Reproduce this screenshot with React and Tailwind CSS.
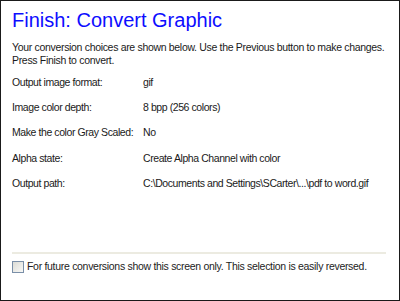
import React from "react";

const rows = [
  ["Output image format:", "gif"],
  ["Image color depth:", "8 bpp (256 colors)"],
  ["Make the color Gray Scaled:", "No"],
  ["Alpha state:", "Create Alpha Channel with color"],
  ["Output path:", "C:\\Documents and Settings\\SCarter\\...\\pdf to word.gif"],
];

export default function App() {
  return (
    <div
      className="w-[400px] h-[301px] bg-white border border-[#1a1a1a] flex flex-col text-[#1a1a1a] overflow-hidden"
      style={{ fontFamily: '"Liberation Sans", Arial, sans-serif' }}
    >
      <div className="pl-[11px] pt-[8px]">
        <div className="text-[20px] leading-[23px] text-[#0d0dff]">Finish: Convert Graphic</div>
        <div className="mt-[9px] text-[10.5px] leading-[12.5px] tracking-[-0.32px] whitespace-nowrap">
          <div>Your conversion choices are shown below. Use the Previous button to make changes.</div>
          <div>Press Finish to convert.</div>
        </div>
        <div className="mt-[10px] flex flex-col gap-[12.2px] text-[10.5px] leading-[13px] tracking-[-0.42px] whitespace-nowrap">
          {rows.map(([k, v]) => (
            <div key={k} className="flex">
              <div className="w-[131px] shrink-0">{k}</div>
              <div>{v}</div>
            </div>
          ))}
        </div>
      </div>
      <div className="flex-1" />
      <div className="pl-[11px]">
        <div className="w-[374px] h-[2px] bg-[#ecebe1]" />
        <div className="mt-[6px] flex items-center gap-[3px] text-[10.5px] leading-[13px] tracking-[-0.3px] whitespace-nowrap">
          <div className="w-[12px] h-[12px] shrink-0 border border-[#7a8fa8] bg-gradient-to-br from-[#dcdcd6] to-[#f8f8f6]" />
          <span className="text-[#222]">For future conversions show this screen only. This selection is easily reversed.</span>
        </div>
      </div>
      <div className="h-[27px]" />
    </div>
  );
}
